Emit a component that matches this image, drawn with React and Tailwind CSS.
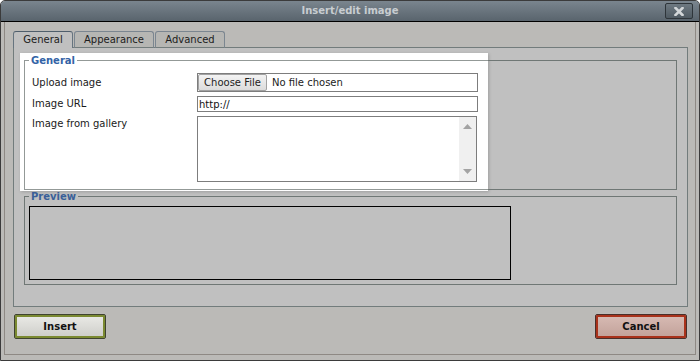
import { useState } from 'react'

const Tab = ({ label, active, width }) => (
  <div
    className={
      active
        ? 'h-[17px] flex items-center justify-center rounded-t-[3px] border border-b-0 border-[#66747f] border-t-[#4f5e6b] bg-[#c0c0c0]'
        : 'h-[17px] flex items-center justify-center rounded-t-[3px] border border-[#7b8690] border-b-[#727c7c] bg-[#b6b6b3]'
    }
    style={{ width }}
  >
    {label}
  </div>
)

const ScrollArrow = ({ down }) => (
  <svg width="9" height="5" viewBox="0 0 9 5" className="block">
    <path d={down ? 'M0 0h9L4.5 5z' : 'M4.5 0L9 5H0z'} fill="#a3a3a3" />
  </svg>
)

export default function App() {
  const [url, setUrl] = useState('http://')

  return (
    <div className="w-[700px] h-[361px] flex flex-col border border-[#3b3b3b] rounded-t-[5px] bg-[#bbbab7] font-['DejaVu_Sans',Verdana,sans-serif] text-[10px] leading-none text-[#1b1b1b] overflow-hidden">
      {/* Title bar */}
      <div className="h-[21px] shrink-0 relative flex items-center justify-center bg-gradient-to-b from-[#7a858e] to-[#59646d] border-b border-black">
        <span className="font-bold text-[#c8cdd1]">Insert/edit image</span>
        <button className="absolute right-[6px] top-[2px] w-[28px] h-[16px] flex items-center justify-center rounded-[2px] border border-[#2e353a] bg-gradient-to-b from-[#6e7981] to-[#4f5a62]">
          <svg width="10" height="9" viewBox="0 0 10 9">
            <path d="M1.5 1l7 7M8.5 1l-7 7" stroke="#d3d7d9" strokeWidth="2.6" strokeLinecap="square" />
          </svg>
        </button>
      </div>

      {/* Body */}
      <div className="flex-1 flex flex-col px-[3px] pb-[5px]">
        <div className="flex-1 flex flex-col border-x border-b border-[#8e8984] pt-[9px] pl-[8px] pr-[7px]">
          {/* Tabs */}
          <div className="flex gap-[1px] relative z-10 -mb-px text-[#1c1c1c]">
            <Tab label="General" active width="60px" />
            <Tab label="Appearance" width="80px" />
            <Tab label="Advanced" width="70px" />
          </div>

          {/* Panel */}
          <div className="h-[260px] relative z-0 border border-[#727c7c] bg-[#c0c0c0] px-[10px] pt-[6px]">
            {/* spotlight */}
            <div className="absolute left-[6px] top-[5px] w-[468px] h-[138px] bg-white -z-10 shadow-[1px_1px_3px_rgba(0,0,0,0.18)]" />
            <div className="absolute left-[6px] top-[5px] w-[468px] h-[138px] bg-white/25 z-[1]" />

            <fieldset className="border border-[#6f7775] pl-[7px] pb-[7px]">
              <legend className="relative z-[2] ml-[-3px] px-[2px] leading-[13px] font-bold text-[#3363a6]">General</legend>
              <div className="relative z-[2] mt-[6px] grid grid-cols-[165px_281px] gap-y-[4px] text-[#1a1a1a]">
                <div className="h-[19px] flex items-center">Upload image</div>
                <div className="h-[19px] flex items-stretch border border-[#7d7d7d] bg-white">
                  <div className="w-[69px] flex items-center justify-center border border-[#a2a2a2] rounded-[2px] bg-gradient-to-b from-[#f3f3f3] to-[#dcdcdc] text-[#222]">
                    Choose File
                  </div>
                  <div className="flex items-center pl-[5px] text-[#222]">No file chosen</div>
                </div>

                <div className="h-[16px] flex items-center">Image URL</div>
                <input
                  value={url}
                  onChange={(e) => setUrl(e.target.value)}
                  className="h-[16px] border border-[#7d7d7d] px-[1px] bg-white text-[10px] text-[#111] outline-none font-['DejaVu_Sans',Verdana,sans-serif]"
                />

                <div className="h-[66px] pt-[3px]">Image from gallery</div>
                <div className="h-[66px] w-[280px] flex border border-[#7d7d7d] bg-white">
                  <div className="flex-1" />
                  <div className="w-[17px] bg-[#f0f0f0] flex flex-col items-center justify-between py-[7px]">
                    <ScrollArrow />
                    <ScrollArrow down />
                  </div>
                </div>
              </div>
            </fieldset>

            <fieldset className="border border-[#6f7775] pl-[4px] pb-[4px]">
              <legend className="ml-[0px] px-[2px] leading-[13px] font-bold text-[#3a5f98]">Preview</legend>
              <div className="mt-[3px] w-[482px] h-[74px] border border-black" />
            </fieldset>
          </div>

          {/* Buttons */}
          <div className="mt-[8px] px-[2px] flex justify-between">
            <button className="w-[90px] h-[23px] rounded-[1px] border-2 border-[#7b8a31] outline outline-1 outline-[#3f4330] bg-gradient-to-b from-[#e8e8e4] to-[#cfcfcb] font-bold text-[#111] shadow-[0_0_2px_rgba(255,255,255,0.6)]">
              Insert
            </button>
            <button className="w-[90px] h-[23px] rounded-[1px] border-2 border-[#a9321b] outline outline-1 outline-[#4a2f2a] bg-gradient-to-b from-[#d6b9b2] to-[#c3a39b] font-bold text-[#111] shadow-[0_0_2px_rgba(255,255,255,0.6)]">
              Cancel
            </button>
          </div>
        </div>
      </div>
    </div>
  )
}
